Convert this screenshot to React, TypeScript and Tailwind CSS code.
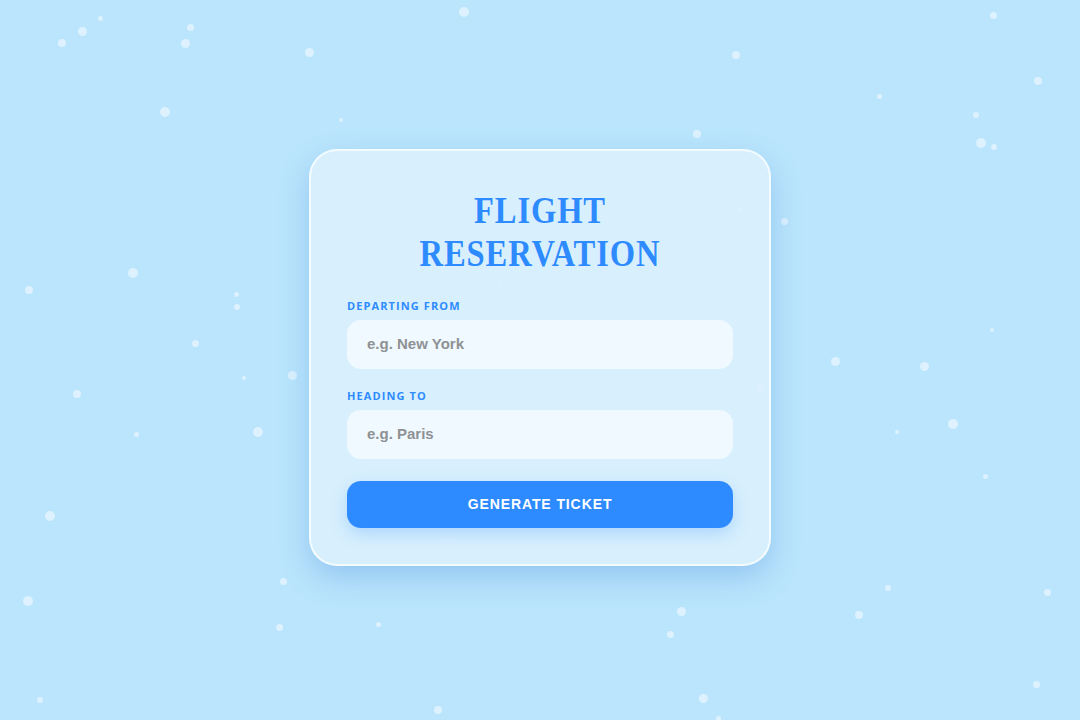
import React from "react";

const dots: [number, number, number][] = [
  [464, 12, 10], [993, 15, 7], [100, 18, 5], [82, 31, 9], [190, 27, 7], [62, 43, 8], [185, 43, 9],
  [309, 52, 9], [736, 55, 8], [1038, 81, 8], [879, 96, 5], [165, 112, 10], [976, 115, 6], [341, 120, 4],
  [697, 134, 8], [981, 143, 10], [994, 147, 6], [740, 210, 4], [784, 221, 7], [133, 273, 10], [29, 290, 8],
  [236, 294, 5], [237, 307, 6], [195, 343, 7], [992, 330, 4], [835, 361, 9], [924, 366, 9], [292, 375, 9],
  [244, 378, 4], [77, 394, 8], [760, 387, 7], [258, 432, 10], [136, 434, 5], [953, 424, 10], [897, 432, 4],
  [985, 476, 5], [50, 516, 10], [448, 540, 4], [283, 581, 7], [888, 588, 6], [1047, 592, 7], [28, 601, 10],
  [681, 611, 9], [859, 615, 8], [279, 627, 7], [378, 624, 5], [670, 634, 7], [1036, 684, 7], [40, 700, 6],
  [703, 698, 9], [438, 710, 8], [718, 718, 5], [500, 285, 4],
];

function Field({ label, placeholder, top }: { label: string; placeholder: string; top: string }) {
  return (
    <div className={`flex flex-col ${top}`}>
      <label className="text-[11px] leading-[14px] font-bold tracking-[1.1px] text-[#2e8bff] font-['Open_Sans',sans-serif]">
        {label}
      </label>
      <div className="mt-[7px] h-[49px] rounded-[14px] bg-[#f0f9ff] flex items-center px-[20px] text-[15px] font-bold text-[#8e9194] font-['Liberation_Sans',Arial,sans-serif]">
        {placeholder}
      </div>
    </div>
  );
}

export default function App() {
  return (
    <div className="relative w-[1080px] h-[720px] overflow-hidden bg-[#bae5fc] flex items-center justify-center">
      {dots.map(([x, y, s], i) => (
        <div
          key={i}
          className="absolute rounded-full bg-white/50"
          style={{ left: x - s / 2, top: y - s / 2, width: s, height: s }}
        />
      ))}
      <div className="relative mb-[6px] w-[462px] h-[417px] rounded-[28px] border-2 border-white/70 bg-[#dbf1fd]/90 shadow-[0_12px_30px_rgba(60,130,220,0.3)] px-[36px] pt-[38px] flex flex-col">
        <h1 className="text-center text-[#2e8bff] text-[37px] leading-[43px] font-bold tracking-[1px] scale-x-[0.88] font-['Liberation_Serif',serif]">
          FLIGHT
          <br />
          RESERVATION
        </h1>
        <Field label="DEPARTING FROM" placeholder="e.g. New York" top="mt-[24px]" />
        <Field label="HEADING TO" placeholder="e.g. Paris" top="mt-[20px]" />
        <button className="mt-[22px] h-[47px] rounded-[14px] bg-[#2e8bff] text-white text-[14px] font-bold tracking-[0.9px] shadow-[0_6px_16px_rgba(46,139,255,0.25)] font-['Liberation_Sans',Arial,sans-serif]">
          GENERATE TICKET
        </button>
      </div>
    </div>
  );
}
